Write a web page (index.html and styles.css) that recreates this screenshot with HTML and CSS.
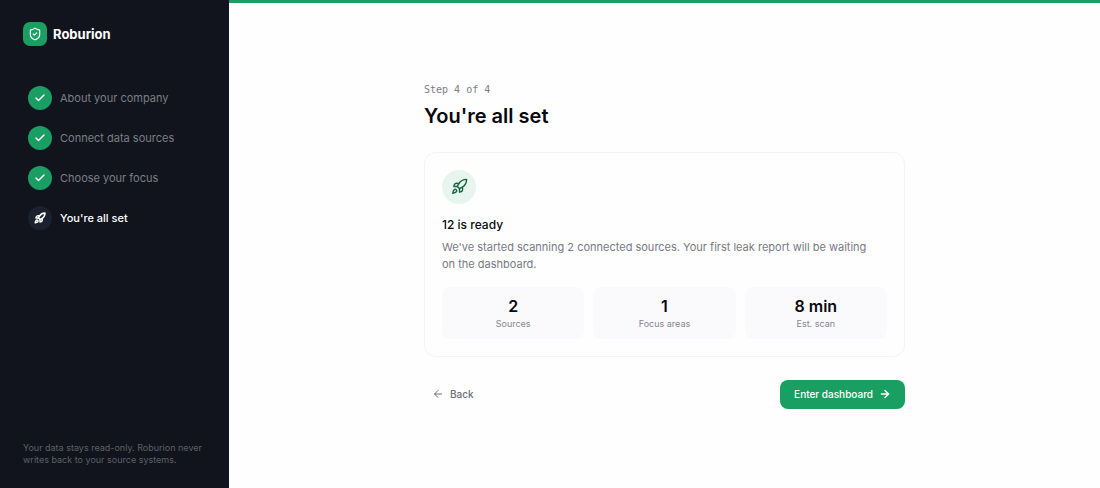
FILE: index.html
```html
<!DOCTYPE html>
<html lang="en">
<head>
    <meta charset="UTF-8">
    <meta name="viewport" content="width=device-width, initial-scale=1.0">
    <title>Roburion - You're all set</title>
    <link rel="stylesheet" href="styles.css">
</head>
<body>
    <div class="layout">
        <aside class="sidebar">
            <div class="brand">
                <span class="brand-logo">
                    <svg class="icon" width="14" height="14" viewBox="0 0 24 24"><path d="M20 13c0 5-3.500 7.500-7.660 8.950a1 1 0 0 1-.67-.01C7.500 20.500 4 18 4 13V6a1 1 0 0 1 1-1c2 0 4.500-1.200 6.240-2.720a1.170 1.170 0 0 1 1.520 0C14.510 3.810 17 5 19 5a1 1 0 0 1 1 1z"/><path d="m9 12 2 2 4-4"/></svg>
                </span>
                <span class="brand-name">Roburion</span>
            </div>

            <ol class="steps">
                <li class="step">
                    <span class="step-icon"><svg class="icon" width="12" height="12" viewBox="0 0 24 24"><path d="M20 6 9 17l-5-5"/></svg></span>
                    <span>About your company</span>
                </li>
                <li class="step">
                    <span class="step-icon"><svg class="icon" width="12" height="12" viewBox="0 0 24 24"><path d="M20 6 9 17l-5-5"/></svg></span>
                    <span>Connect data sources</span>
                </li>
                <li class="step">
                    <span class="step-icon"><svg class="icon" width="12" height="12" viewBox="0 0 24 24"><path d="M20 6 9 17l-5-5"/></svg></span>
                    <span>Choose your focus</span>
                </li>
                <li class="step active" aria-current="step">
                    <span class="step-icon"><svg class="icon" width="12" height="12" viewBox="0 0 24 24"><path d="M4.500 16.500c-1.500 1.260-2 5-2 5s3.740-.5 5-2c.71-.84.7-2.130-.09-2.910a2.180 2.180 0 0 0-2.910-.09z"/><path d="m12 15-3-3a22 22 0 0 1 2-3.950A12.880 12.880 0 0 1 22 2c0 2.720-.78 7.500-6 11a22.350 22.350 0 0 1-4 2z"/><path d="M9 12H4s.55-3.030 2-4c1.620-1.080 5 0 5 0"/><path d="M12 15v5s3.030-.55 4-2c1.080-1.620 0-5 0-5"/></svg></span>
                    <span>You're all set</span>
                </li>
            </ol>

            <p class="note">Your data stays read-only. Roburion never writes back to your source systems.</p>
        </aside>

        <main class="main">
            <div class="progress"></div>
            <div class="center">
                <div class="content">
                    <p class="step-label">Step 4 of 4</p>
                    <h1>You're all set</h1>

                    <section class="card">
                        <span class="card-icon">
                            <svg class="icon" width="17" height="17" viewBox="0 0 24 24"><path d="M4.500 16.500c-1.500 1.260-2 5-2 5s3.740-.5 5-2c.71-.84.7-2.130-.09-2.910a2.180 2.180 0 0 0-2.910-.09z"/><path d="m12 15-3-3a22 22 0 0 1 2-3.950A12.880 12.880 0 0 1 22 2c0 2.720-.78 7.500-6 11a22.350 22.350 0 0 1-4 2z"/><path d="M9 12H4s.55-3.030 2-4c1.620-1.080 5 0 5 0"/><path d="M12 15v5s3.030-.55 4-2c1.080-1.620 0-5 0-5"/></svg>
                        </span>
                        <h2>12 is ready</h2>
                        <p class="card-text">We've started scanning 2 connected sources. Your first leak report will be waiting on the dashboard.</p>
                        <dl class="stats">
                            <div class="stat">
                                <dd>2</dd>
                                <dt>Sources</dt>
                            </div>
                            <div class="stat">
                                <dd>1</dd>
                                <dt>Focus areas</dt>
                            </div>
                            <div class="stat">
                                <dd>8 min</dd>
                                <dt>Est. scan</dt>
                            </div>
                        </dl>
                    </section>

                    <div class="actions">
                        <button type="button" class="btn btn-back">
                            <svg class="icon" width="12" height="12" viewBox="0 0 24 24"><path d="m12 19-7-7 7-7"/><path d="M19 12H5"/></svg>
                            Back
                        </button>
                        <button type="button" class="btn btn-primary">
                            Enter dashboard
                            <svg class="icon" width="12" height="12" viewBox="0 0 24 24"><path d="M5 12h14"/><path d="m12 5 7 7-7 7"/></svg>
                        </button>
                    </div>
                </div>
            </div>
        </main>
    </div>
</body>
</html>
```

FILE: styles.css
```css
* {
    box-sizing: border-box;
}
body {
    margin: 0;
    font-family: Inter, "Liberation Sans", sans-serif;
    background: #fefefe;
    color: #08090d;
}
h1, h2, p, ol, dl, dd {
    margin: 0;
    padding: 0;
}
.icon {
    display: block;
    flex-shrink: 0;
    fill: none;
    stroke: currentColor;
    stroke-width: 2;
    stroke-linecap: round;
    stroke-linejoin: round;
}
.layout {
    display: flex;
    min-height: 100vh;
}

/* sidebar */
.sidebar {
    display: flex;
    flex-direction: column;
    flex-shrink: 0;
    width: 229px;
    padding: 22px 23px;
    background: #11141c;
    color: #ffffff;
}
.brand {
    display: flex;
    align-items: center;
    gap: 6px;
}
.brand-logo {
    display: flex;
    align-items: center;
    justify-content: center;
    width: 24px;
    height: 24px;
    border-radius: 7px;
    background: #1a9f62;
}
.brand-name {
    font-size: 13px;
    font-weight: 700;
}
.steps {
    display: flex;
    flex-direction: column;
    gap: 16px;
    margin-top: 40px;
    padding: 0 5px;
    list-style: none;
}
.step {
    display: flex;
    align-items: center;
    gap: 8px;
    font-size: 11px;
    color: #7c7f86;
}
.step-icon {
    display: flex;
    align-items: center;
    justify-content: center;
    width: 24px;
    height: 24px;
    border-radius: 50%;
    background: #1a9f62;
    color: #ffffff;
}
.step .icon {
    stroke-width: 3;
}
.step.active {
    color: #ffffff;
    font-weight: 500;
}
.step.active .step-icon {
    background: #1c222d;
}
.note {
    margin-top: auto;
    font-size: 9px;
    line-height: 12px;
    color: #5d6067;
}

/* main */
.main {
    display: flex;
    flex: 1;
    flex-direction: column;
}
.progress {
    height: 3px;
    background: #1a9f62;
}
.center {
    display: flex;
    flex: 1;
    align-items: center;
    justify-content: center;
    padding: 24px;
}
.content {
    width: 100%;
    max-width: 481px;
}
.step-label {
    font-family: "DejaVu Sans Mono", monospace;
    font-size: 10px;
    line-height: 14px;
    color: #7b7d85;
}
h1 {
    margin-top: 6px;
    font-size: 20px;
    line-height: 26px;
    font-weight: 600;
}
.card {
    margin-top: 23px;
    padding: 17px;
    border: 1px solid #f3f3f8;
    border-radius: 12px;
}
.card-icon {
    display: flex;
    align-items: center;
    justify-content: center;
    width: 34px;
    height: 34px;
    border-radius: 50%;
    background: #e8f5ef;
    color: #17643f;
}
h2 {
    margin-top: 11px;
    font-size: 12px;
    line-height: 20px;
    font-weight: 500;
}
.card-text {
    margin-top: 4px;
    padding-right: 8px;
    font-size: 11px;
    line-height: 17px;
    color: #777982;
}
.stats {
    display: grid;
    grid-template-columns: repeat(3, 1fr);
    gap: 9px;
    margin-top: 14px;
}
.stat {
    padding: 9px;
    border-radius: 8px;
    background: #fafafc;
    text-align: center;
}
.stat dd {
    font-size: 16px;
    line-height: 20px;
    font-weight: 600;
}
.stat dt {
    margin-top: 2px;
    font-size: 9px;
    line-height: 12px;
    color: #85878f;
}
.actions {
    display: flex;
    justify-content: space-between;
    margin-top: 23px;
}
.btn {
    display: flex;
    align-items: center;
    gap: 6px;
    height: 29px;
    border: none;
    border-radius: 8px;
    background: none;
    font-family: inherit;
    font-size: 10px;
    font-weight: 500;
    cursor: pointer;
}
.btn-back {
    padding: 0 8px;
    color: #6d6f79;
}
.btn-primary {
    padding: 0 14px;
    background: #1a9f62;
    color: #ffffff;
}
.btn-primary .icon {
    stroke-width: 3;
}
```
